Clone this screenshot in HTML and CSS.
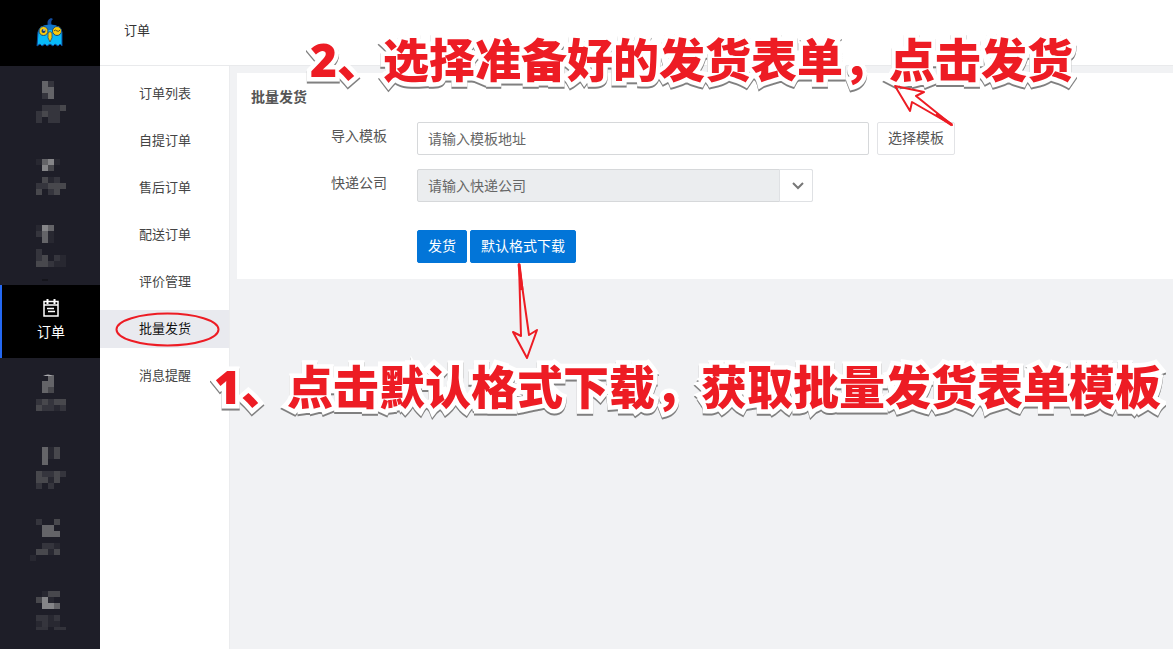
FILE: index.html
```html
<!DOCTYPE html>
<html lang="zh-CN">
<head>
  <meta charset="UTF-8" />
  <title>批量发货</title>
  <link rel="stylesheet" href="styles.css">
</head>
<body>
  <div class="page">
    <!-- Menú principal -->
    <nav class="nav">
      <a class="logo" href="#" aria-label="首页">
        <svg width="28" height="32" viewBox="0 0 28 32">
          <path d="M12 9 Q10 3 15 1 L17 2 Q14 4 16 9z" fill="#124da0"/>
          <path d="M2 15 Q4 8 14 8 Q24 8 26 15 V29 l-2 -2 -2 2 -3 -2 -2 2 -3 -2 -3 2 -2 -2 -3 2 -2 -2 -3 2z" fill="#08baf8" stroke="#0b4a9a" stroke-width="1"/>
          <path d="M4 10 Q14 5 24 10 L20 13 H8z" fill="#1277cc"/>
          <circle cx="7.500" cy="14" r="4.500" fill="#f8c90c" stroke="#174a7c"/>
          <circle cx="21" cy="14" r="4.500" fill="#f8c90c" stroke="#174a7c"/>
          <circle cx="7.500" cy="14" r="2" fill="#153e70"/>
          <path d="M7 13h2" stroke="#fff"/>
          <path d="M18 14 q1 -2 3 0 q2 1 3 -1" fill="none" stroke="#5c5420"/>
          <path d="M12 16 Q14 13 16 16 Q17 21 14 25 Q11 21 12 16z" fill="#f8c90c" stroke="#174a7c" stroke-width=".8"/>
        </svg>
      </a>
      <a class="nav-item" href="#">
        <svg class="mosaic" width="40" height="73" viewBox="0 0 40 73">
          <path class="t2" d="M18 18h6M12 30h6M12 42h18M6 48h6M18 48h12M6 54h6M18 54h12"/>
          <path class="t3" d="M30 42h6M12 48h6"/>
          <path class="t4" d="M12 18h6M12 24h12M18 30h6"/>
        </svg>
      </a>
      <a class="nav-item" href="#">
        <svg class="mosaic" width="40" height="73" viewBox="0 0 40 73">
          <path class="t1" d="M6 23h6M24 23h6M18 41h6"/>
          <path class="t2" d="M24 41h6M6 47h12M18 53h6"/>
          <path class="t3" d="M18 29h6M12 41h6M18 47h18M6 53h6M24 53h6"/>
          <path class="t4" d="M12 23h6"/>
          <path class="t5" d="M18 23h6M12 29h6"/>
        </svg>
      </a>
      <a class="nav-item" href="#">
        <svg class="mosaic" width="40" height="73" viewBox="0 0 40 73">
          <path class="t1" d="M6 16h6M18 22h6M18 28h6M30 46h6M24 52h12"/>
          <path class="t2" d="M6 22h6M6 40h6M6 46h6M24 46h6M18 52h6"/>
          <path class="t3" d="M12 46h6M6 52h12"/>
          <path class="t4" d="M18 16h6M12 22h6M12 28h6"/>
          <path class="t5" d="M12 16h6"/>
          <path d="M12 67h6v2h-6z" fill="#15151c"/>
        </svg>
      </a>
      <a class="nav-item active" href="#">
        <svg width="16" height="18" viewBox="0 0 16 18" fill="none" stroke="#fff">
          <path d="M1 2.500h14v14.500h-14zM1 6h14" stroke-width="1.500"/>
          <path d="M4.500 0v5M11.500 0v5" stroke-width="2"/>
          <path d="M4 9.500h7M5 12.500h7" stroke-width="1.500"/>
        </svg>
        <span>订单</span>
      </a>
      <a class="nav-item" href="#">
        <svg class="mosaic" width="40" height="73" viewBox="0 0 40 73">
          <path class="t1" d="M24 50h6"/>
          <path class="t2" d="M6 44h6M18 44h6M12 50h12M30 50h6"/>
          <path class="t3" d="M18 32h6M12 44h6M24 44h12M6 50h6"/>
          <path class="t4" d="M18 20h6M12 26h12M12 32h6"/>
          <path d="M13 18q5 -3 10 0z" fill="#aaaaae"/>
        </svg>
      </a>
      <a class="nav-item" href="#">
        <svg class="mosaic" width="40" height="73" viewBox="0 0 40 73">
          <path class="t1" d="M18 19h6M18 25h6M18 49h6"/>
          <path class="t2" d="M12 43h12M30 43h6M6 55h6M18 55h6"/>
          <path class="t3" d="M24 19h6M24 25h6M6 43h6M24 43h6M6 49h12M24 49h6"/>
          <path class="t4" d="M12 19h6M12 25h6M12 31h6"/>
        </svg>
      </a>
      <a class="nav-item" href="#">
        <svg class="mosaic" width="40" height="73" viewBox="0 0 40 73">
          <path class="t1" d="M24 42h6M18 48h6M0 54h6"/>
          <path class="t2" d="M6 18h6M12 42h12"/>
          <path class="t3" d="M24 18h6M6 48h12M24 48h6"/>
          <path class="t4" d="M12 24h12M12 30h18"/>
        </svg>
      </a>
      <a class="nav-item" href="#">
        <svg class="mosaic" width="40" height="73" viewBox="0 0 40 73">
          <path class="t1" d="M12 17h6M18 23h6M18 41h6M6 47h6M18 47h12"/>
          <path class="t2" d="M6 41h12M24 41h6M12 47h6"/>
          <path class="t3" d="M18 17h12M6 23h6"/>
          <path class="t4" d="M24 29h6"/>
          <path class="t5" d="M12 23h6M12 29h12"/>
          <path d="M6 50h12v3h-12zM24 50h12v3h-12z" fill="#33333b"/>
        </svg>
      </a>
    </nav>

    <div class="main">
      <header class="header">订单</header>
      <div class="body">
        <!-- Submenú -->
        <nav class="menu">
          <a href="#">订单列表</a>
          <a href="#">自提订单</a>
          <a href="#">售后订单</a>
          <a href="#">配送订单</a>
          <a href="#">评价管理</a>
          <a href="#" class="active">批量发货</a>
          <a href="#">消息提醒</a>
        </nav>

        <!-- Formulario -->
        <main class="content">
          <form class="card">
            <h1>批量发货</h1>
            <div class="row">
              <label for="plantilla">导入模板</label>
              <input id="plantilla" class="field" type="text" placeholder="请输入模板地址">
              <button type="button" class="btn">选择模板</button>
            </div>
            <div class="row">
              <label for="empresa">快递公司</label>
              <div class="select">
                <select id="empresa" class="field">
                  <option>请输入快递公司</option>
                </select>
                <span class="arrow">
                  <svg width="12" height="8" viewBox="0 0 12 8"><path d="M1 1l5 5 5-5" fill="none" stroke="#777" stroke-width="2"/></svg>
                </span>
              </div>
            </div>
            <div class="actions">
              <button type="button" class="btn primary">发货</button>
              <button type="button" class="btn primary">默认格式下载</button>
            </div>
          </form>
        </main>
      </div>
    </div>

    <!-- Notas de ayuda -->
    <p class="note note-2">2、选择准备好的发货表单，点击发货</p>
    <p class="note note-1">1、点击默认格式下载，获取批量发货表单模板</p>
    <svg class="marks" width="1173" height="649" viewBox="0 0 1173 649" fill="none" stroke="#ed1c24" stroke-width="2" stroke-linejoin="round">
      <ellipse cx="167.500" cy="329.500" rx="51" ry="16"/>
      <path d="M519 264L521 336L513 332L527 358L537 330L529 335L519 264L520 290"/>
      <path d="M952 125L912 102L910 111L895 86L924 92L916 96Z"/>
      <path d="M519 264L522 290M952 125L936 114" stroke-width="3"/>
    </svg>
  </div>
</body>
</html>
```

FILE: styles.css
```css
* {
  box-sizing: border-box;
}
body {
  margin: 0;
  font-family: "Noto Sans CJK SC", sans-serif;
  font-size: 14px;
  color: #555;
  background-color: #f1f2f4;
}
a {
  color: inherit;
  text-decoration: none;
}
.page {
  position: relative;
  display: flex;
  height: 100vh;
  overflow: hidden;
}

/* menú principal */
.nav {
  flex: 0 0 100px;
  background-color: #1e1e28;
}
.logo {
  display: flex;
  height: 66px;
  align-items: center;
  justify-content: center;
  background-color: #000;
}
.nav-item {
  display: flex;
  flex-direction: column;
  height: 73px;
  align-items: center;
  justify-content: center;
  gap: 4px;
  line-height: 20px;
}
.nav-item.active {
  padding-bottom: 4px;
  background-color: #000;
  border-left: 2px solid #2468f2;
  color: #fff;
}
.mosaic path {
  stroke-width: 6px;
}
.mosaic path[fill] {
  stroke-width: 0;
}
.t1 { stroke: #282831; }
.t2 { stroke: #35353d; }
.t3 { stroke: #48484d; }
.t4 { stroke: #646468; }
.t5 { stroke: #858588; }

.main {
  flex: 1;
  display: flex;
  flex-direction: column;
}
.header {
  height: 66px;
  padding: 0 24px;
  line-height: 60px;
  font-size: 13px;
  color: #333;
  background-color: #fff;
  border-bottom: 1px solid #e9eaec;
}
.body {
  flex: 1;
  display: flex;
}
.menu {
  flex: 0 0 130px;
  display: flex;
  flex-direction: column;
  gap: 9px;
  padding-top: 9px;
  background-color: #fff;
  border-right: 1px solid #ebecee;
}
.menu a {
  height: 38px;
  padding-left: 39px;
  line-height: 35px;
  font-size: 13px;
  color: #444;
}
.menu a.active {
  background-color: #e9eaef;
  color: #111;
}

/* formulario */
.content {
  flex: 1;
  padding: 7px 0 0 7px;
}
.card {
  padding: 13px 14px 16px;
  background-color: #fff;
}
.card h1 {
  margin: 0 0 16px;
  font-size: 14px;
  line-height: 20px;
  color: #555;
}
.row {
  display: flex;
  margin-bottom: 14px;
}
.row label {
  width: 166px;
  padding-right: 30px;
  text-align: right;
  line-height: 26px;
}
.field {
  width: 452px;
  height: 33px;
  padding: 0 10px 2px;
  font: inherit;
  color: #666;
  background-color: #fff;
  border: 1px solid #d6d8da;
  border-radius: 2px;
}
.field::placeholder {
  color: #666;
}
.btn {
  height: 33px;
  padding: 0 10px 3px;
  font: inherit;
  color: #555;
  background-color: #fff;
  border: 1px solid #e2e3e6;
  border-radius: 2px;
}
.row .btn {
  margin-left: 8px;
}
.select {
  position: relative;
  width: 396px;
}
.select .field {
  width: 100%;
  appearance: none;
  background-color: #ebedef;
}
.arrow {
  position: absolute;
  top: 0;
  right: 0;
  display: flex;
  width: 34px;
  height: 33px;
  padding-left: 3px;
  align-items: center;
  justify-content: center;
  background-color: #fff;
  border: 1px solid #dfe1e4;
  border-radius: 0 2px 2px 0;
  pointer-events: none;
}
.actions {
  display: flex;
  gap: 3px;
  padding: 14px 0 0 166px;
}
.btn.primary {
  color: #fff;
  background-color: #0275d8;
  border-color: #0275d8;
}

/* notas sobre la pantalla */
.note {
  position: absolute;
  margin: 0;
  font-family: "Open Sans", "Noto Sans CJK SC", sans-serif;
  font-size: 46px;
  font-weight: 900;
  line-height: 60px;
  white-space: nowrap;
  color: #ed1c24;
  -webkit-text-stroke: 9px #fff;
  paint-order: stroke fill;
  stroke-linejoin: round;
  filter: drop-shadow(0 2px 0 #808080);
}
.note-2 {
  top: 29px;
  left: 310px;
}
.note-1 {
  top: 356px;
  left: 214px;
}
.marks {
  position: absolute;
  top: 0;
  left: 0;
  pointer-events: none;
}
```
